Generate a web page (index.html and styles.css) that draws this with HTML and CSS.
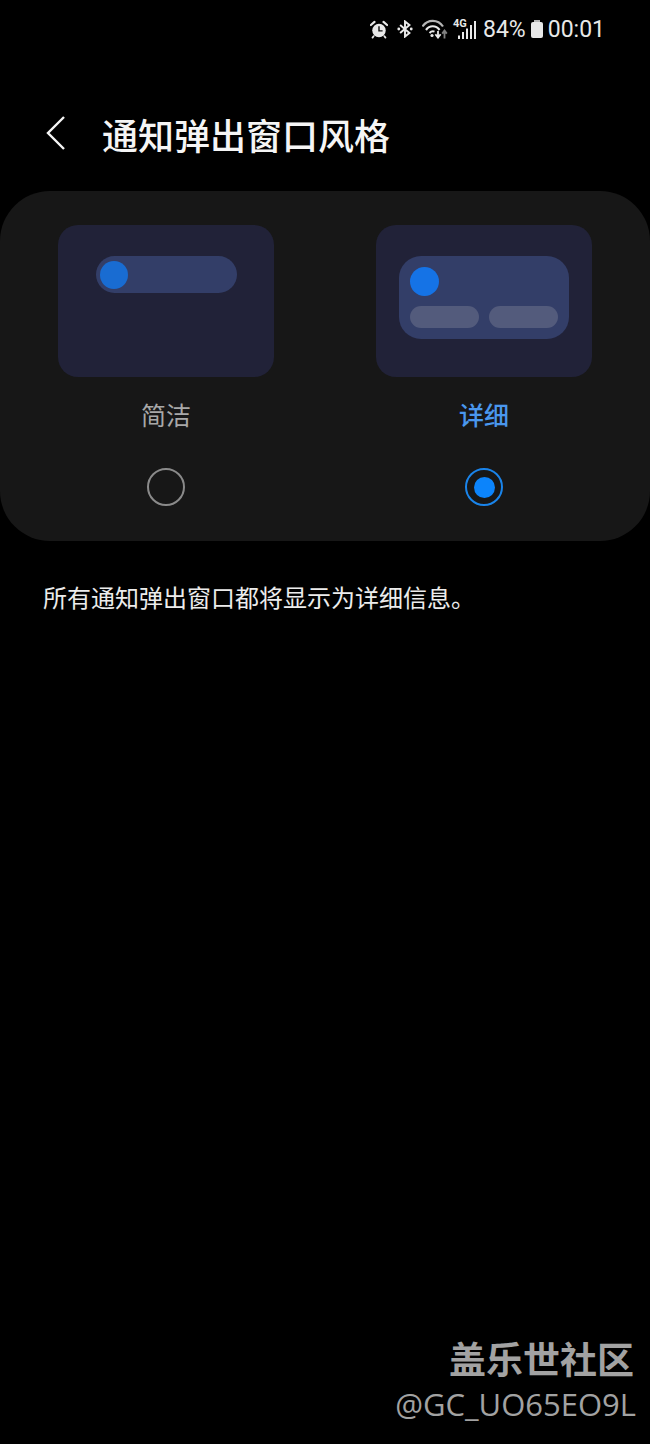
FILE: index.html
```html
<!DOCTYPE html>
<html lang="zh-CN">
<head>
    <meta charset="UTF-8">
    <meta name="viewport" content="width=device-width, initial-scale=1.0">
    <title>通知弹出窗口风格</title>
    <link rel="stylesheet" href="styles.css">
</head>
<body>
    <div class="status-bar">
        <svg class="icon-alarm" width="18" height="19" viewBox="0 0 20 20">
            <circle cx="10" cy="11" r="7.5" fill="#e8e8e8"/>
            <path d="M1 5 L5 1.5 M19 5 L15 1.5" stroke="#e8e8e8" stroke-width="2.4" stroke-linecap="round"/>
            <path d="M4 17.5 L2.8 19 M16 17.5 L17.2 19" stroke="#e8e8e8" stroke-width="2" stroke-linecap="round"/>
            <path d="M10 6.5 V11.5 H14" fill="none" stroke="#111" stroke-width="1.6"/>
        </svg>
        <svg class="icon-bt" width="16" height="18" viewBox="0 0 18 20">
            <path d="M3.5 5.5 L14 14.5 L9 18.5 V1.5 L14 5.5 L3.5 14.5" fill="none" stroke="#e8e8e8" stroke-width="2.2"/>
            <circle cx="2" cy="10" r="1.6" fill="#e8e8e8"/>
            <circle cx="16" cy="10" r="1.6" fill="#e8e8e8"/>
        </svg>
        <svg class="icon-wifi" width="26" height="20" viewBox="0 0 26 20">
            <path d="M0.5 7.5 C5.5 0 16 0 21 7.5" fill="none" stroke="#b4b4b4" stroke-width="2.2"/>
            <path d="M4 11 C7.5 6 14 6 17.5 11" fill="none" stroke="#e8e8e8" stroke-width="2.2"/>
            <path d="M7.5 14 C9 12.4 11 12 12.5 12.6" fill="none" stroke="#e8e8e8" stroke-width="2"/>
            <circle cx="10" cy="16.5" r="1.6" fill="#e8e8e8"/>
            <path d="M16 12 V18 M13.4 15.2 L16 18.6 L18.6 15.2" fill="none" stroke="#e8e8e8" stroke-width="1.8"/>
            <path d="M22.5 19.5 V12 M20.2 14.6 L22.5 11.5 L24.8 14.6" fill="none" stroke="#808080" stroke-width="1.8"/>
        </svg>
        <div class="signal">
            <span class="signal-type">4G</span>
            <svg width="18" height="18" viewBox="0 0 18 18">
                <path d="M1 14.5 V18 M5 11 V18 M9 7.5 V18 M13 4 V18 M17 0 V18" stroke="#e8e8e8" stroke-width="2"/>
            </svg>
        </div>
        <span class="battery-text">84%</span>
        <svg class="icon-battery" width="14" height="20" viewBox="0 0 14 20">
            <path d="M4 1 H10 V3 H4 Z" fill="#b5b5b5"/>
            <rect x="1" y="3" width="12" height="16" rx="2" fill="#e8e8e8"/>
        </svg>
        <span class="clock">00:01</span>
    </div>

    <header class="title-bar">
        <svg class="back" width="22" height="36" viewBox="0 0 22 36">
            <path d="M19 1 L3 17 L19 33" fill="none" stroke="#f5f5f5" stroke-width="2.4"/>
        </svg>
        <h1>通知弹出窗口风格</h1>
    </header>

    <section class="style-card">
        <div class="option">
            <div class="preview">
                <div class="mini-pill"><span class="dot dot-small"></span></div>
            </div>
            <p class="option-label">简洁</p>
            <span class="radio"></span>
        </div>
        <div class="option">
            <div class="preview">
                <div class="mini-panel">
                    <span class="dot dot-large"></span>
                    <div class="mini-buttons">
                        <span></span>
                        <span></span>
                    </div>
                </div>
            </div>
            <p class="option-label selected">详细</p>
            <span class="radio checked"></span>
        </div>
    </section>

    <p class="description">所有通知弹出窗口都将显示为详细信息。</p>

    <div class="watermark">
        <div class="wm-name">盖乐世社区</div>
        <div class="wm-user">@GC_UO65EO9L</div>
    </div>
</body>
</html>
```

FILE: styles.css
```css
* {
    margin: 0;
    padding: 0;
    box-sizing: border-box;
}

body {
    position: relative;
    height: 1444px;
    overflow: hidden;
    background-color: #000;
    color: #f5f5f5;
    font-family: "Noto Sans CJK SC", "Noto Sans", sans-serif;
}

.status-bar {
    display: flex;
    justify-content: flex-end;
    align-items: center;
    height: 30px;
    margin-top: 14px;
    padding-right: 45px;
    color: #e8e8e8;
    font-family: Roboto, sans-serif;
    font-size: 23px;
}

.icon-alarm {
    margin-right: 9px;
}

.icon-bt {
    margin-right: 9px;
}

.icon-wifi {
    margin-right: 5px;
}

.signal {
    position: relative;
    display: flex;
    justify-content: flex-end;
    align-items: flex-end;
    width: 23px;
    height: 20px;
    margin-right: 7px;
}

.signal-type {
    position: absolute;
    left: 0;
    top: -2px;
    font-size: 11px;
    font-weight: 700;
}

.battery-text {
    margin-right: 4px;
}

.icon-battery {
    margin-right: 4px;
}

.title-bar {
    display: flex;
    align-items: center;
    height: 50px;
    margin-top: 65px;
    padding-left: 45px;
}

.back {
    margin-right: 35px;
}

h1 {
    font-size: 36px;
    font-weight: 500;
    line-height: 50px;
}

.style-card {
    display: flex;
    justify-content: space-between;
    height: 350px;
    margin-top: 32px;
    padding: 34px 58px 0;
    background-color: #171717;
    border-radius: 50px;
}

.option {
    display: flex;
    flex-direction: column;
    align-items: center;
    width: 216px;
}

.preview {
    display: flex;
    justify-content: center;
    width: 216px;
    height: 152px;
    padding-top: 31px;
    background-color: #212238;
    border-radius: 20px;
}

.mini-pill {
    display: flex;
    align-items: center;
    width: 141px;
    height: 37px;
    padding-left: 4px;
    background-color: #333e68;
    border-radius: 19px;
}

.dot {
    display: block;
    border-radius: 50%;
}

.dot-small {
    width: 28px;
    height: 28px;
    background-color: #196cd2;
}

.dot-large {
    width: 29px;
    height: 29px;
    background-color: #1573e6;
}

.mini-panel {
    width: 170px;
    height: 83px;
    padding: 11px 11px 0;
    background-color: #333e68;
    border-radius: 22px;
}

.mini-buttons {
    display: flex;
    gap: 10px;
    margin-top: 10px;
}

.mini-buttons span {
    width: 69px;
    height: 22px;
    background-color: #535b7c;
    border-radius: 11px;
}

.option-label {
    margin-top: 19px;
    font-size: 25px;
    line-height: 36px;
    color: #a8a8a8;
}

.option-label.selected {
    color: #4a97ee;
    font-weight: 500;
}

.radio {
    display: flex;
    justify-content: center;
    align-items: center;
    width: 38px;
    height: 38px;
    margin-top: 36px;
    border: 2px solid #8a8a8a;
    border-radius: 50%;
}

.radio.checked {
    border-color: #1a84ea;
}

.radio.checked::after {
    content: "";
    width: 21px;
    height: 21px;
    background-color: #0c84fb;
    border-radius: 50%;
}

.description {
    margin-top: 39px;
    padding-left: 43px;
    font-size: 24px;
    line-height: 34px;
    color: #ececec;
}

.watermark {
    position: absolute;
    right: 14px;
    bottom: 17px;
    text-align: right;
    color: #a2a2a2;
}

.wm-name {
    margin-right: 2px;
    font-size: 37px;
    font-weight: 700;
    line-height: 46px;
}

.wm-user {
    font-family: "Open Sans", sans-serif;
    font-size: 31px;
    line-height: 46px;
}
```
